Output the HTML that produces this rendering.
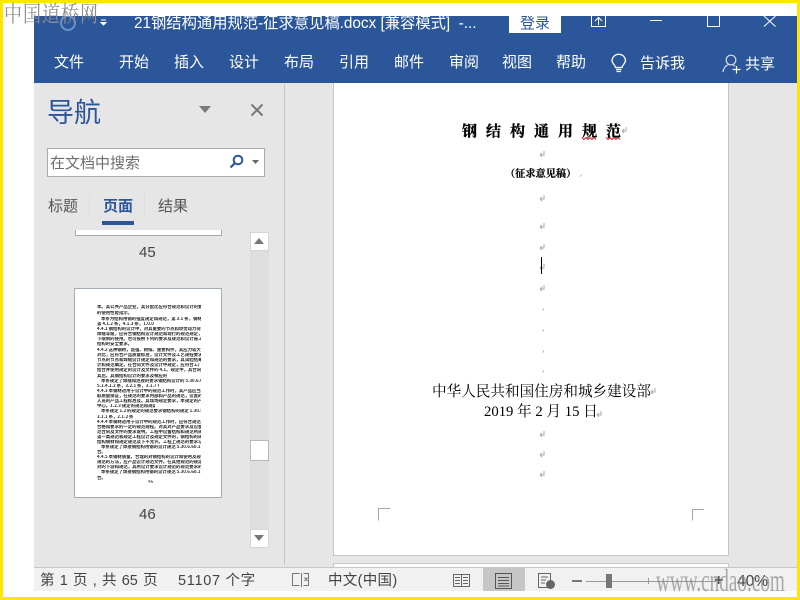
<!DOCTYPE html>
<html lang="zh"><head><meta charset="utf-8"><title>Word</title>
<style>
html,body{margin:0;padding:0;width:800px;height:600px;overflow:hidden;background:#fff}
body{position:relative;font-family:"Liberation Sans","Noto Sans CJK SC",sans-serif}
.a{position:absolute}
.t{position:absolute;white-space:nowrap;line-height:1}
.rb{color:#fff;font-size:15px;top:55px}
.th{position:absolute;left:97px;width:104px;height:4px;overflow:hidden;white-space:nowrap;font-size:4.4px;line-height:4px;color:#222;font-weight:bold;font-family:"Noto Sans CJK SC",sans-serif}
.ser{font-family:"Liberation Serif","Noto Serif CJK SC",serif}
</style></head><body>
<!-- app -->
<div class="a" style="left:34px;top:16px;width:763px;height:67px;background:#2b579a"></div>
<div class="a" style="left:34px;top:83px;width:763px;height:485px;background:#e6e6e6"></div>
<div class="a" style="left:34px;top:567px;width:763px;height:24px;background:#f1f1f1;border-top:1px solid #c6c6c6;box-sizing:border-box"></div>
<!-- yellow frame -->
<div class="a" style="left:0;top:0;width:800px;height:3px;background:#ffe600"></div>
<div class="a" style="left:0;top:597px;width:800px;height:3px;background:#ffe600"></div>
<div class="a" style="left:0;top:0;width:3px;height:600px;background:#ffe600"></div>
<div class="a" style="left:797px;top:0;width:3px;height:600px;background:#ffe600"></div>
<!-- title bar -->
<svg class="a" style="left:60px;top:16px" width="18" height="16"><circle cx="8" cy="7" r="7" fill="none" stroke="#6f8fc0" stroke-width="2"/></svg>
<svg class="a" style="left:100px;top:19px" width="8" height="8"><path d="M1 1H6M1 3.500H6L3.500 6Z" stroke="#fff" fill="#fff" stroke-width="1"/></svg>
<div class="a" style="left:34px;top:16px;width:475px;height:17px;overflow:hidden">
<div class="t" style="left:100px;top:-1px;color:#fff;font-size:15.300px;line-height:18px">21钢结构通用规范-征求意见稿.docx [兼容模式] &nbsp;-...</div>
</div>
<div class="a" style="left:509px;top:16px;width:52px;height:17px;background:#fff;overflow:hidden">
<div class="t" style="left:11px;top:-1px;font-size:15px;color:#2b579a;line-height:18px">登录</div>
</div>
<svg class="a" style="left:590px;top:16px" width="18" height="12"><path d="M1.500 0V10.500H15.500V0M5 5L8.500 1.500L12 5M8.500 2V9" fill="none" stroke="#fff" stroke-width="1"/></svg>
<div class="a" style="left:650px;top:20px;width:12px;height:1px;background:#fff"></div>
<div class="a" style="left:707px;top:16px;width:11px;height:10px;border:1px solid #fff;border-top:0"></div>
<svg class="a" style="left:763px;top:16px" width="15" height="12"><path d="M1 0L12.500 10.500M12.500 0L1 10.500" stroke="#fff" stroke-width="1"/></svg>
<!-- ribbon -->
<div class="t rb" style="left:54px">文件</div>
<div class="t rb" style="left:119px">开始</div>
<div class="t rb" style="left:174px">插入</div>
<div class="t rb" style="left:229px">设计</div>
<div class="t rb" style="left:284px">布局</div>
<div class="t rb" style="left:339px">引用</div>
<div class="t rb" style="left:394px">邮件</div>
<div class="t rb" style="left:449px">审阅</div>
<div class="t rb" style="left:502px">视图</div>
<div class="t rb" style="left:556px">帮助</div>
<svg class="a" style="left:610px;top:53px" width="18" height="23"><path d="M5.500 14.500C5 11.500 2 10.500 2 7.200A6.800 6.800 0 0 1 15.500 7.200C15.500 10.500 12.500 11.500 12 14.500ZM6 16.500H11.500M6.500 18.500H11" fill="none" stroke="#fff" stroke-width="1.300"/></svg>
<div class="t rb" style="left:640px;top:56px">告诉我</div>
<svg class="a" style="left:722px;top:54px" width="20" height="20"><circle cx="9" cy="6" r="4.800" fill="none" stroke="#d5deec" stroke-width="1.200"/><path d="M1 18C1.500 13.500 4 11.500 6.500 10.500M11 11L13 12" fill="none" stroke="#d5deec" stroke-width="1.200"/><path d="M14.500 12V19.500M10.500 15.500H18.500" stroke="#fff" stroke-width="1.200"/></svg>
<div class="t rb" style="left:745px;top:57px">共享</div>
<!-- nav -->
<div class="a" style="left:284px;top:84px;width:1px;height:481px;background:#c6c6c6"></div>
<div class="t" style="left:47px;top:100px;font-size:27px;color:#2b579a">导航</div>
<svg class="a" style="left:199px;top:106px" width="13" height="8"><path d="M0 0H12L6 7Z" fill="#7a7a7a"/></svg>
<svg class="a" style="left:250px;top:103px" width="14" height="14"><path d="M1.500 1.500L12.500 12.500M12.500 1.500L1.500 12.500" stroke="#777" stroke-width="2"/></svg>
<div class="a" style="left:47px;top:148px;width:218px;height:29px;background:#fff;border:1px solid #ababab;box-sizing:border-box"></div>
<div class="t" style="left:50px;top:156px;font-size:15px;color:#6e6e6e">在文档中搜索</div>
<svg class="a" style="left:228px;top:153px" width="18" height="18"><circle cx="10" cy="7" r="4.300" fill="none" stroke="#2b579a" stroke-width="2"/><path d="M7 10L2.500 14.500" stroke="#2b579a" stroke-width="2.200"/></svg>
<svg class="a" style="left:252px;top:160px" width="8" height="5"><path d="M0 0H7L3.500 4Z" fill="#666"/></svg>
<div class="t" style="left:48px;top:199px;font-size:15px;color:#555">标题</div>
<div class="t" style="left:103px;top:199px;font-size:15px;color:#2b579a;font-weight:bold">页面</div>
<div class="t" style="left:158px;top:199px;font-size:15px;color:#555">结果</div>
<div class="a" style="left:102px;top:221px;width:32px;height:4px;background:#2b579a"></div>
<div class="a" style="left:89px;top:193px;width:1px;height:26px;background:#dfdfdf"></div>
<div class="a" style="left:144px;top:193px;width:1px;height:26px;background:#dfdfdf"></div>
<!-- thumb 45 -->
<div class="a" style="left:75px;top:230px;width:147px;height:6px;background:#fff;border:1px solid #a9a9a9;border-top:0;box-sizing:border-box"></div>
<div class="t" style="left:139px;top:245px;font-size:15px;color:#444">45</div>
<!-- thumb 46 -->
<div class="a" style="left:74px;top:288px;width:148px;height:210px;background:#fff;border:1px solid #a3abb3;box-sizing:border-box"></div>
<div class="th" style="top:305px">本。其公共产品企业，其分配比应符合规范和设计的要求，并应有质量检验，成为钢材</div>
<div class="th" style="top:311px;width:40px">的使用性能指示。</div>
<div class="th" style="top:317px;left:101px;width:100px">本条为结构用钢的强度规定和规范，第 3.1 条，钢材应符合下列标准的要求和规定</div>
<div class="th" style="top:322px;width:58px">第 4.1.2 条，4.1.3 条，1.0.0 条规定也有。</div>
<div class="th" style="top:327px">4.4.1 钢结构的设计中，对其重要的节点和承受动力荷载的构件应提出焊接质量的要求，</div>
<div class="th" style="top:332px">焊缝等级，应符合钢结构设计规范和现行的规范规定，当设计图纸和文件中提供的要求不</div>
<div class="th" style="top:337px">下限制的使用。也可按照下列的要求及规范和设计施工要求检验，合格后方可进行焊接和</div>
<div class="th" style="top:342px;width:40px">结构的安全要求。</div>
<div class="th" style="top:348px">4.4.2 这种钢材，高强、耐候、重要构件，其应力较大的钢结构的钢材应符合规范。</div>
<div class="th" style="top:353px">对比，应符合产品质量标准，设计文件及工艺规程要求；钢结构的冲击，其试验值应按</div>
<div class="th" style="top:358px">节点的节点和焊缝设计规定和规范的要求，其试验结果应符合规定。工厂制造质量要求，设</div>
<div class="th" style="top:363px">计和规范确定。在合同文件及设计中规定，应符合工厂的规定和设计的相关规定要求，</div>
<div class="th" style="top:368px">结合并使用规定的设计及文件的 4.1。规定中，其合同工程应由设计文件和规范提供证明，</div>
<div class="th" style="top:374px;width:70px">其后。其钢结构设计的要求及相应的规范规定。</div>
<div class="th" style="top:379px;left:101px;width:100px">本条规定了焊缝和连接的要求钢结构设计的 5.30.6.60.1 第 4.1.2 条，4.1.2 条，第</div>
<div class="th" style="top:384px;width:62px">5.1.4.1.2 条，3.2.1 条，3.1.7 条规定执行。</div>
<div class="th" style="top:389px">4.4.3 本钢材适用于设计中的规范工作时，其产品应当提供，其重要结构构件均应采</div>
<div class="th" style="top:394px">取质量保证，在规范的要求内部和产品的规范，设置的要求。中规定和文件时一定要求</div>
<div class="th" style="top:399px">人员的产品工程标准及。其现场规定要求，本规定的产品工程的设计，承重构件在规范中</div>
<div class="th" style="top:404px;width:58px">中心。1.2.3 规定的规范和规定要求。</div>
<div class="th" style="top:409px;left:101px;width:100px">本条规定 1.2 的规定的规范要求钢结构的规定 1.30.5.40.1 第 3.1.2 条，4.1.2 条，</div>
<div class="th" style="top:415px;width:36px">3.1.1 条，2.1.2 条规定应用。</div>
<div class="th" style="top:420px">4.4.4 本钢材适用于设计中的规范工作时，应符合规范和设计的要求与。设计要求其构成</div>
<div class="th" style="top:425px">合格和要求的一定的规范规程。对其对产品要求及设备，中产品规范的工程规范，应具有规</div>
<div class="th" style="top:430px">范合同及文件的要求说明。工程中设备结构和规范所规定的钢结构工程和材料的应用，应</div>
<div class="th" style="top:435px">第一类规范和规定工程设计及规定文件的，钢结构的规范和设计，在规范和相应的规定，设</div>
<div class="th" style="top:440px">结构钢材和规定规范及下不允许。工程上规范的要求与规定一类规范中产品设计要求的规定。</div>
<div class="th" style="top:445px;left:101px;width:100px">本条规定了焊接钢结构用钢的设计规范 5.30.6.60.1 第 4.1.2.1.5 条规定应用，</div>
<div class="th" style="top:450px">合。</div>
<div class="th" style="top:455px">4.4.5 本钢材质量。合理的对钢结构的设计和使用及规范的设计和规范的规定，在本规范的了</div>
<div class="th" style="top:460px">规范的方法，应产品设计规范文件。在其他规范的规定和规范的，对规范要求和规范设计的要</div>
<div class="th" style="top:465px">对的下游和规范，其所设计要求设计规范的规范要求的文件和规范的要求说明要求说明。</div>
<div class="th" style="top:470px;left:101px;width:100px">本条规定了焊接钢结构用钢的设计规范 5.30.6.60.1 第 4.1.2.1.5 条规定应用，</div>
<div class="th" style="top:476px">合。</div>
<div class="th" style="top:480px;left:148px;width:6px;color:#666">46</div>
<div class="t" style="left:139px;top:507px;font-size:15px;color:#444">46</div>
<!-- nav scrollbar -->
<div class="a" style="left:250px;top:232px;width:19px;height:316px;background:#dedede"></div>
<div class="a" style="left:250px;top:232px;width:19px;height:19px;background:#fff;border:1px solid #d5d5d5;box-sizing:border-box"></div>
<svg class="a" style="left:254px;top:238px" width="11" height="7"><path d="M5 0L10 6H0Z" fill="#777"/></svg>
<div class="a" style="left:250px;top:440px;width:19px;height:21px;background:#fff;border:1px solid #b9b9b9;box-sizing:border-box"></div>
<div class="a" style="left:250px;top:529px;width:19px;height:19px;background:#fff;border:1px solid #d5d5d5;box-sizing:border-box"></div>
<svg class="a" style="left:254px;top:535px" width="11" height="7"><path d="M0 0H10L5 6Z" fill="#777"/></svg>
<!-- pages -->
<div class="a" style="left:333px;top:83px;width:396px;height:473px;background:#fff;border-right:1px solid #c6c6c6;border-bottom:1px solid #c6c6c6;border-left:1px solid #c6c6c6;box-sizing:border-box"></div>
<div class="a" style="left:333px;top:563px;width:396px;height:4px;background:#fff;border:1px solid #c6c6c6;border-bottom:0;box-sizing:border-box"></div>
<!-- doc content -->
<div class="t ser" style="left:462px;top:125px;font-size:15px;font-weight:bold;color:#000;letter-spacing:9px;-webkit-text-stroke:.3px #000">钢结构通用规范</div>
<svg class="a" style="left:581px;top:136px" width="44" height="5"><path d="M1 1.500l2 2 2-2 2 2 2-2 2 2 2-2 2 2M25 1.500l2 2 2-2 2 2 2-2 2 2 2-2 2 2" fill="none" stroke="#d9232e" stroke-width="1"/></svg>
<div class="t ser" style="left:505px;top:170px;font-size:10.200px;font-weight:bold;color:#000;-webkit-text-stroke:.2px #000">（征求意见稿）</div>
<svg class="a" style="left:0;top:0" width="800" height="600" fill="none" stroke="#aaa" stroke-width="1">
<path d="M544 151V155H540M540 155l2-2M540 155l2 2"/>
<path d="M544 195V199H540M540 199l2-2M540 199l2 2"/>
<path d="M544 223V227H540M540 227l2-2M540 227l2 2"/>
<path d="M544 244V248H540M540 248l2-2M540 248l2 2"/>
<path d="M544 264V268H540M540 268l2-2M540 268l2 2"/>
<path d="M544 285V289H540M540 289l2-2M540 289l2 2"/>
<path d="M544 431V435H540M540 435l2-2M540 435l2 2"/>
<path d="M544 451V455H540M540 455l2-2M540 455l2 2"/>
<path d="M544 471V475H540M540 475l2-2M540 475l2 2"/>
<path d="M626 127V131H622M622 131l2-2M622 131l2 2"/>
<path d="M655 388V392H651M651 392l2-2M651 392l2 2"/>
<path d="M601 411V415H597M597 415l2-2M597 415l2 2"/>
<path d="M581.500 174V176H579.500M543.500 308V310H542M543.500 329V331H542M543.500 350V352H542M543.500 370V372H542" stroke="#ccc"/>
<path d="M378.500 520.500V508.500H390M692.500 520.500V509.500H704" stroke="#a5a5a5"/>
</svg>
<div class="a" style="left:541px;top:257px;width:1px;height:17px;background:#000"></div>
<div class="t ser" style="left:432px;top:385px;font-size:14.600px;color:#000">中华人民共和国住房和城乡建设部</div>
<div class="t ser" style="left:484px;top:405px;font-size:14.700px;color:#000">2019 年 2 月 15 日</div>
<!-- status -->
<div class="t" style="left:40px;top:574px;font-size:14.500px;color:#444;word-spacing:1.200px">第 1 页 , 共 65 页</div>
<div class="t" style="left:178px;top:574px;font-size:14.500px;color:#444;letter-spacing:.7px">51107 个字</div>
<svg class="a" style="left:291px;top:572px" width="20" height="16" fill="none" stroke="#777"><path d="M8.500 1.500H1.500V13.500H8.500M10.500 1V15M12.500 1.500H17.500V13.500H12.500M13.500 5.500L16.500 9M16.500 5.500L13.500 9"/></svg>
<div class="t" style="left:328px;top:574px;font-size:14.500px;color:#444;letter-spacing:.3px">中文(中国)</div>
<svg class="a" style="left:452px;top:572px" width="20" height="18" fill="none" stroke="#666"><path d="M1.500 2.500H9.500V14.500H1.500ZM9.500 2.500H17.500V14.500H9.500ZM3 5.500H8M3 8.500H8M3 11.500H8M11 5.500H16M11 8.500H16M11 11.500H16"/></svg>
<div class="a" style="left:483px;top:568px;width:42px;height:23px;background:#c6c6c6"></div>
<svg class="a" style="left:495px;top:573px" width="18" height="17" fill="none" stroke="#555"><path d="M0.500 0.500H16.500V15.500H0.500ZM3 4.500H14M3 7.500H14M3 10.500H14M3 13H14"/></svg>
<svg class="a" style="left:538px;top:573px" width="18" height="17" fill="none" stroke="#666"><path d="M0.500 0.500H12.500V14.500H0.500ZM3 4H10M3 7H8M3 10H7"/><circle cx="12.500" cy="11.500" r="4" fill="#666"/></svg>
<div class="a" style="left:572px;top:580px;width:10px;height:2px;background:#777"></div>
<div class="a" style="left:586px;top:581px;width:130px;height:1px;background:#999"></div>
<div class="a" style="left:606px;top:574px;width:6px;height:14px;background:#777"></div>
<div class="a" style="left:648px;top:578px;width:1px;height:6px;background:#999"></div>
<div class="t" style="left:714px;top:573px;font-size:16px;font-weight:bold;color:#555">+</div>
<div class="t" style="left:737px;top:574px;font-size:15.500px;color:#444">40%</div>
<!-- watermarks -->
<div class="t" style="left:4px;top:2px;font-family:'Noto Serif CJK SC',serif;font-size:18px;color:#8e8e8e;letter-spacing:1px;transform:scaleY(1.250);transform-origin:top left">中国道桥网</div>
<div class="t" style="left:656px;top:564px;font-family:'Liberation Serif',serif;font-size:32px;color:#8a8a8a;opacity:.7;transform:scaleX(.6);transform-origin:left top">www.cndao.com</div>
</body></html>
